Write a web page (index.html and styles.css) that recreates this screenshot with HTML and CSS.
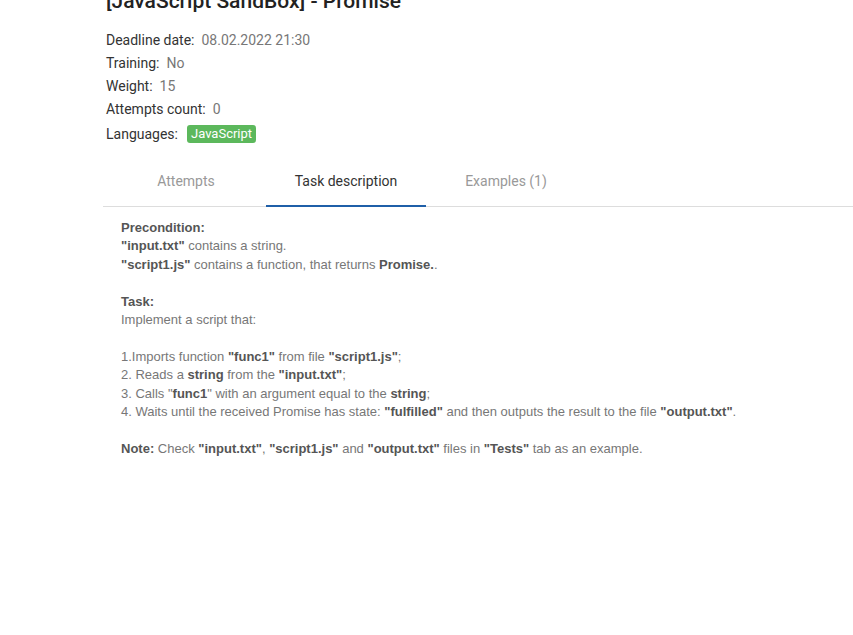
FILE: index.html
```html
<!DOCTYPE html>
<html>
<head>
<meta charset="utf-8">
<link rel="stylesheet" href="styles.css">
</head>
<body>
<div class="page">
  <h1 class="title">[JavaScript SandBox] - Promise</h1>
  <div class="meta">
    <div class="meta-row"><span class="label">Deadline date:</span><span class="value">08.02.2022 21:30</span></div>
    <div class="meta-row"><span class="label">Training:</span><span class="value">No</span></div>
    <div class="meta-row"><span class="label">Weight:</span><span class="value">15</span></div>
    <div class="meta-row"><span class="label">Attempts count:</span><span class="value">0</span></div>
    <div class="meta-row lang"><span class="label">Languages:</span><span class="badge">JavaScript</span></div>
  </div>
  <div class="tabs">
    <div class="tab">Attempts</div>
    <div class="tab active">Task description</div>
    <div class="tab">Examples (1)</div>
  </div>
  <div class="content">
    <p><b>Precondition:</b><br>
    <b>"input.txt"</b> contains a string.<br>
    <b>"script1.js"</b> contains a function, that returns <b>Promise.</b>.</p>
    <p><b>Task:</b><br>
    Implement a script that:</p>
    <p>1.Imports function <b>"func1"</b> from file <b>"script1.js"</b>;<br>
    2. Reads a <b>string</b> from the <b>"input.txt"</b>;<br>
    3. Calls "<b>func1</b>" with an argument equal to the <b>string</b>;<br>
    4. Waits until the received Promise has state: <b>"fulfilled"</b> and then outputs the result to the file <b>"output.txt"</b>.</p>
    <p><b>Note:</b> Check <b>"input.txt"</b>, <b>"script1.js"</b> and <b>"output.txt"</b> files in <b>"Tests"</b> tab as an example.</p>
  </div>
</div>
</body>
</html>
```
FILE: styles.css
```css
html, body {
  margin: 0;
  padding: 0;
  background: #fff;
}
.page {
  padding-left: 106px;
  margin-top: -11px;
}
.title {
  font-family: Roboto, "Liberation Sans", sans-serif;
  font-weight: 500;
  font-size: 21px;
  line-height: 24px;
  color: #222;
  margin: 0 0 15px 0;
}
.meta {
  font-family: Roboto, "Liberation Sans", sans-serif;
  font-size: 14px;
}
.meta-row {
  height: 23px;
  display: flex;
  align-items: center;
}
.meta-row.lang {
  height: 25px;
  padding-top: 1px;
  box-sizing: border-box;
  height: 26px;
}
.label {
  color: #333;
  font-weight: 400;
  margin-right: 7px;
}
.value {
  color: #777;
}
.badge {
  background: #5cb85c;
  color: #fff;
  font-size: 13px;
  padding: 1px 4px;
  border-radius: 3px;
  margin-left: 2px;
  line-height: 16px;
}
.tabs {
  display: flex;
  margin-top: 17px;
  margin-left: -3px;
  border-bottom: 1px solid #ddd;
  font-family: Roboto, "Liberation Sans", sans-serif;
  font-size: 14px;
}
.tab {
  width: 160px;
  text-align: center;
  color: #999;
  padding: 10px 0 16px;
  line-height: 16px;
  border-bottom: 2px solid transparent;
  margin-bottom: -1px;
}
.tab:first-child {
  margin-left: 3px;
}
.tab.active {
  color: #333;
  border-bottom-color: #1f5fa8;
}
.content {
  padding: 12px 15px;
  font-family: "Liberation Sans", Arial, sans-serif;
  font-size: 13px;
  line-height: 18.4px;
  color: #777;
}
.content p {
  margin: 0 0 18.4px 0;
}
.content b {
  color: #555;
}
```
